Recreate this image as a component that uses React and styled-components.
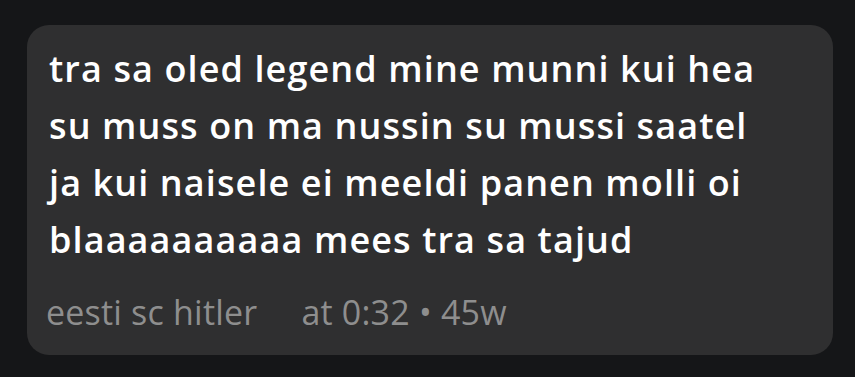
import React from 'react';
import styled, { createGlobalStyle } from 'styled-components';

const GlobalStyle = createGlobalStyle`
  html, body {
    margin: 0;
    padding: 0;
    background: #151618;
  }
  body {
    font-family: "Open Sans", "Noto Sans", sans-serif;
  }
`;

const Page = styled.div`
  width: 855px;
  height: 377px;
  box-sizing: border-box;
  padding: 25px 22px 22px 27px;
  display: flex;
`;

const Bubble = styled.div`
  flex: 1;
  background: #2f2f30;
  border-radius: 22px;
  padding: 15px 20px 0 22px;
  display: flex;
  flex-direction: column;
`;

const Body = styled.div`
  color: #ffffff;
  font-size: 36px;
  font-weight: 600;
  line-height: 57px;
  letter-spacing: 1.1px;
`;

const Meta = styled.div`
  display: flex;
  gap: 44px;
  margin: 24px 0 0 -3px;
  color: #8e8e8e;
  font-size: 34px;
  font-weight: 400;
  line-height: 40px;
  letter-spacing: 0.2px;
`;

const lines = [
  'tra sa oled legend mine munni kui hea',
  'su muss on ma nussin su mussi saatel',
  'ja kui naisele ei meeldi panen molli oi',
  'blaaaaaaaaaa mees tra sa tajud',
];

export default function App() {
  return (
    <>
      <GlobalStyle />
      <Page>
        <Bubble>
          <Body>
            {lines.map((l) => (
              <div key={l}>{l}</div>
            ))}
          </Body>
          <Meta>
            <span>eesti sc hitler</span>
            <span>at 0:32 • 45w</span>
          </Meta>
        </Bubble>
      </Page>
    </>
  );
}
